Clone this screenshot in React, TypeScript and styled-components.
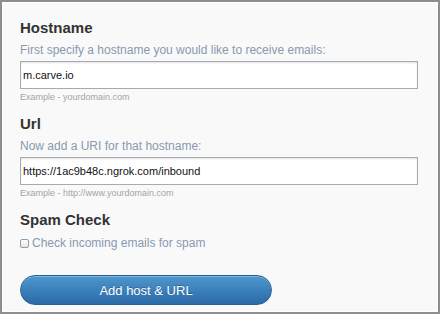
import React, { ChangeEvent, useState } from 'react';
import { styled, createGlobalStyle } from 'styled-components';

const GlobalStyle = createGlobalStyle`
  html, body {
    margin: 0;
    padding: 0;
    background: #f9f9f9;
  }

  * {
    box-sizing: border-box;
  }
`;

interface FieldProps {
  title: string;
  description: string;
  value: string;
  example: string;
  onChange: (e: ChangeEvent<HTMLInputElement>) => void;
}

const Field = ({ title, description, value, example, onChange }: FieldProps) => (
  <Section>
    <Heading>{title}</Heading>
    <Description>{description}</Description>
    <TextInput type="text" value={value} onChange={onChange} />
    <Hint>{example}</Hint>
  </Section>
);

const App = () => {
  const [hostname, setHostname] = useState('m.carve.io');
  const [url, setUrl] = useState('https://1ac9b48c.ngrok.com/inbound');
  const [spamCheck, setSpamCheck] = useState(false);

  return (
    <>
      <GlobalStyle />
      <Panel>
        <Field
          title="Hostname"
          description="First specify a hostname you would like to receive emails:"
          value={hostname}
          example="Example - yourdomain.com"
          onChange={(e) => setHostname(e.target.value)}
        />
        <Field
          title="Url"
          description="Now add a URI for that hostname:"
          value={url}
          example="Example - http://www.yourdomain.com"
          onChange={(e) => setUrl(e.target.value)}
        />
        <Section>
          <Heading>Spam Check</Heading>
          <CheckRow>
            <CheckBox
              type="checkbox"
              checked={spamCheck}
              onChange={() => setSpamCheck(!spamCheck)}
            />
            Check incoming emails for spam
          </CheckRow>
        </Section>
        <SubmitButton type="button">Add host &amp; URL</SubmitButton>
      </Panel>
    </>
  );
};

export default App;

const Panel = styled.div`
  display: flex;
  flex-direction: column;
  width: 440px;
  height: 314px;
  padding: 17px 20px 0 18px;
  background: #f9f9f9;
  border: 2px solid #8e8e8e;
  box-shadow: inset 0 0 0 1px #ffffff;
  font-family: 'Liberation Sans', Arial, sans-serif;
`;

const Section = styled.div`
  display: flex;
  flex-direction: column;
  margin-bottom: 12px;
`;

const Heading = styled.h3`
  margin: 0;
  color: #333;
  font-size: 15px;
  line-height: 18px;
  font-weight: 700;
`;

const Description = styled.p`
  margin: 5px 0 0;
  color: #8799b0;
  font-size: 12px;
  line-height: 16px;
`;

const TextInput = styled.input`
  width: 100%;
  height: 28px;
  margin-top: 3px;
  padding: 0 2px;
  color: #111;
  font-family: 'Liberation Sans', Arial, sans-serif;
  font-size: 11px;
  background: #fff;
  border: 1px solid #a3abb6;
  box-shadow: inset 0 1px 2px rgba(0, 0, 0, 0.12);
  outline: none;
`;

const Hint = styled.span`
  margin-top: 2px;
  color: #a4a4a4;
  font-size: 9px;
  line-height: 12px;
`;

const CheckRow = styled.label`
  display: flex;
  align-items: center;
  gap: 3px;
  margin-top: 6px;
  color: #8799b0;
  font-size: 12px;
  line-height: 16px;
`;

const CheckBox = styled.input`
  appearance: none;
  width: 9px;
  height: 9px;
  margin: 1px 0 0 0;
  background: linear-gradient(#ffffff, #e6e6e6);
  border: 1px solid #9a9a9a;
  border-radius: 2px;
`;

const SubmitButton = styled.button`
  width: 252px;
  height: 30px;
  margin-top: 12px;
  color: #fff;
  font-family: 'Liberation Sans', Arial, sans-serif;
  font-size: 13px;
  text-shadow: 0 -1px 0 rgba(0, 0, 0, 0.25);
  background: linear-gradient(#4e97cf, #2a6aa7);
  border: 1px solid #2c5f92;
  border-radius: 15px;
  box-shadow: inset 0 1px 0 rgba(255, 255, 255, 0.3);
  cursor: pointer;
`;
